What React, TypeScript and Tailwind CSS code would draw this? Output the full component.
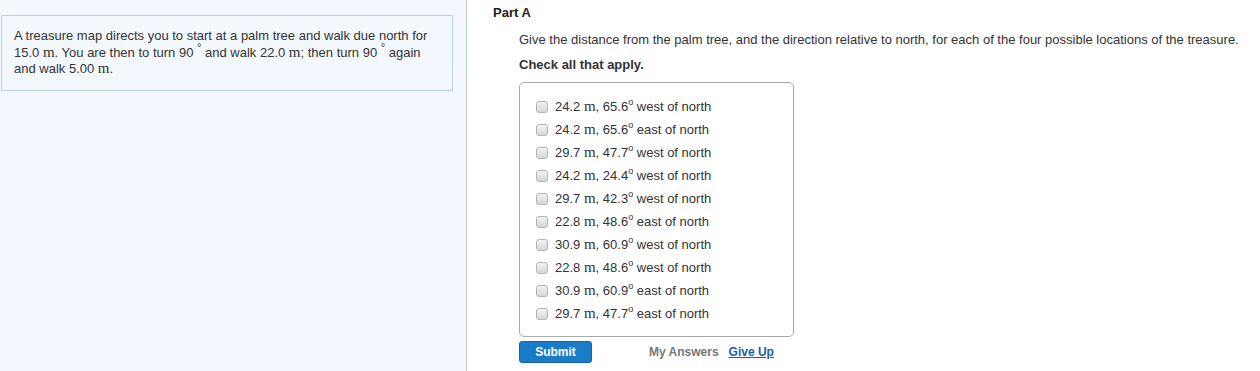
import React from "react";

const options = [
  ["24.2", "65.6", "west of north"],
  ["24.2", "65.6", "east of north"],
  ["29.7", "47.7", "west of north"],
  ["24.2", "24.4", "west of north"],
  ["29.7", "42.3", "west of north"],
  ["22.8", "48.6", "east of north"],
  ["30.9", "60.9", "west of north"],
  ["22.8", "48.6", "west of north"],
  ["30.9", "60.9", "east of north"],
  ["29.7", "47.7", "east of north"],
];

const M = () => (
  <span className="font-['Liberation_Serif',serif] text-[15px] leading-none">m</span>
);

const Deg = ({ c, size }: { c: string; size: string }) => (
  <span className={`relative -top-[6px] leading-none ${size}`}>{c}</span>
);

export default function App() {
  return (
    <div className="flex w-[1260px] h-[371px] bg-white font-['Liberation_Sans',Arial,sans-serif] text-[#333] overflow-hidden">
      <div className="w-[467px] shrink-0 bg-[#f3f8fe] border-r border-[#bccfe3] pt-[15px] pr-[13px]">
        <div className="h-[76px] border border-[#bccfe3] ml-px pl-[12px] pr-2 pt-[12px] text-[13px] leading-[16.5px]">
          A treasure map directs you to start at a palm tree and walk due north for 15.0 <M />. You are then to turn 90 <Deg c="°" size="text-[11px]" /> and walk 22.0 <M />; then turn 90 <Deg c="°" size="text-[11px]" /> again and walk 5.00 <M />.
        </div>
      </div>
      <div className="flex-1 pl-[26px] pt-[4px]">
        <div className="text-[13px] font-bold text-[#222] leading-[18px]">Part A</div>
        <div className="pl-[26px]">
          <div className="mt-[10px] text-[13px] leading-[16px] text-[#333] whitespace-nowrap">
            Give the distance from the palm tree, and the direction relative to north, for each of the four possible locations of the treasure.
          </div>
          <div className="mt-[9px] text-[13px] font-bold leading-[16px] text-[#333]">Check all that apply.</div>
          <div className="mt-[9px] w-[275px] h-[255px] border border-[#aaa] rounded-[5px] pt-[12px] pl-[16px]">
            {options.map(([d, a, dir], i) => (
              <div key={i} className="flex items-center h-[23px]">
                <span className="w-[12px] h-[12px] rounded-[3px] border border-[#b5b5b5] bg-gradient-to-b from-[#f3f3f3] to-[#d6d6d6] shrink-0" />
                <span className="ml-[7px] text-[13px] leading-[16px] text-[#333] whitespace-nowrap">
                  {d} <M />, {a}<Deg c="o" size="text-[9px]" /> {dir}
                </span>
              </div>
            ))}
          </div>
          <div className="mt-[4px] flex items-center">
            <button className="w-[73px] h-[22px] rounded-[3px] bg-[#1a7bc9] border border-[#1565a8] text-white text-[12px] font-bold">
              Submit
            </button>
            <span className="ml-[57px] text-[12px] font-bold text-[#777]">My Answers</span>
            <span className="ml-[10px] text-[12px] font-bold text-[#1a5da8] underline">Give Up</span>
          </div>
        </div>
      </div>
    </div>
  );
}
